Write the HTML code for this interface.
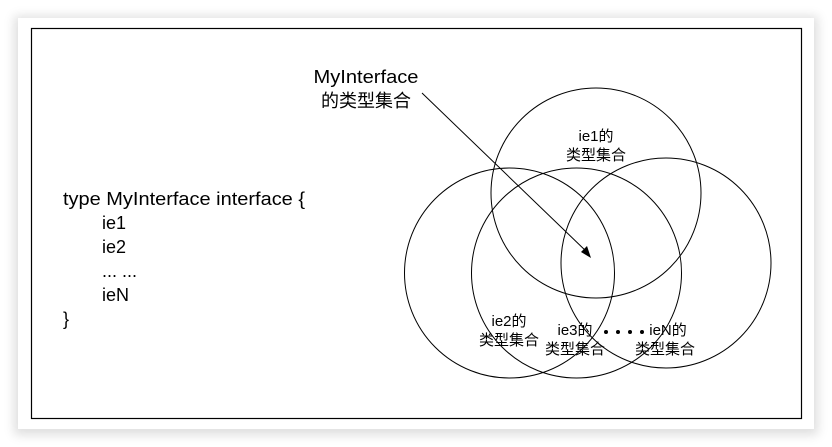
<!DOCTYPE html>
<html><head><meta charset="utf-8"><style>
html,body{margin:0;padding:0;background:#fff;}
body{width:832px;height:447px;position:relative;overflow:hidden;font-family:"Liberation Sans","Noto Sans CJK SC",sans-serif;}
.card{position:absolute;left:18px;top:18px;width:796px;height:411px;background:#fff;box-shadow:0 2px 10px 4px rgba(0,0,0,0.13);}
svg{position:absolute;left:0;top:0;}
</style></head><body>
<div class="card"></div>
<svg width="832" height="447" viewBox="0 0 832 447" font-family="Liberation Sans, Noto Sans CJK SC, sans-serif">
<rect x="31.5" y="28.5" width="770" height="390" fill="none" stroke="#000" stroke-width="1.2"/>
<g fill="none" stroke="#000" stroke-width="1">
<circle cx="596" cy="193" r="105"/>
<circle cx="509.5" cy="273" r="105"/>
<circle cx="576.5" cy="273" r="105"/>
<circle cx="666" cy="263" r="105"/>
<line x1="422" y1="93" x2="588" y2="253"/>
</g>
<polygon points="591,258 581,252 587,246" fill="#000"/>
<g font-size="18" fill="#000" text-anchor="middle">
<text x="366" y="83" textLength="105" lengthAdjust="spacingAndGlyphs">MyInterface</text>
<text x="366" y="107">的类型集合</text>
</g>
<g font-size="18" fill="#000">
<text x="63" y="205" textLength="242" lengthAdjust="spacingAndGlyphs">type MyInterface interface {</text>
<text x="102" y="229">ie1</text>
<text x="102" y="253">ie2</text>
<text x="102" y="277">... ...</text>
<text x="102" y="301">ieN</text>
<text x="63" y="325">}</text>
</g>
<g font-size="15" fill="#000" text-anchor="middle">
<text x="596" y="141">ie1的</text>
<text x="596" y="160">类型集合</text>
<text x="509" y="326">ie2的</text>
<text x="509" y="345">类型集合</text>
<text x="575" y="335">ie3的</text>
<text x="575" y="354">类型集合</text>
<text x="668" y="335">ieN的</text>
<text x="665" y="354">类型集合</text>
</g>
<g fill="#000">
<circle cx="606" cy="332" r="2"/><circle cx="618" cy="332" r="2"/><circle cx="630" cy="332" r="2"/><circle cx="642" cy="332" r="2"/>
</g>
</svg>
</body></html>
